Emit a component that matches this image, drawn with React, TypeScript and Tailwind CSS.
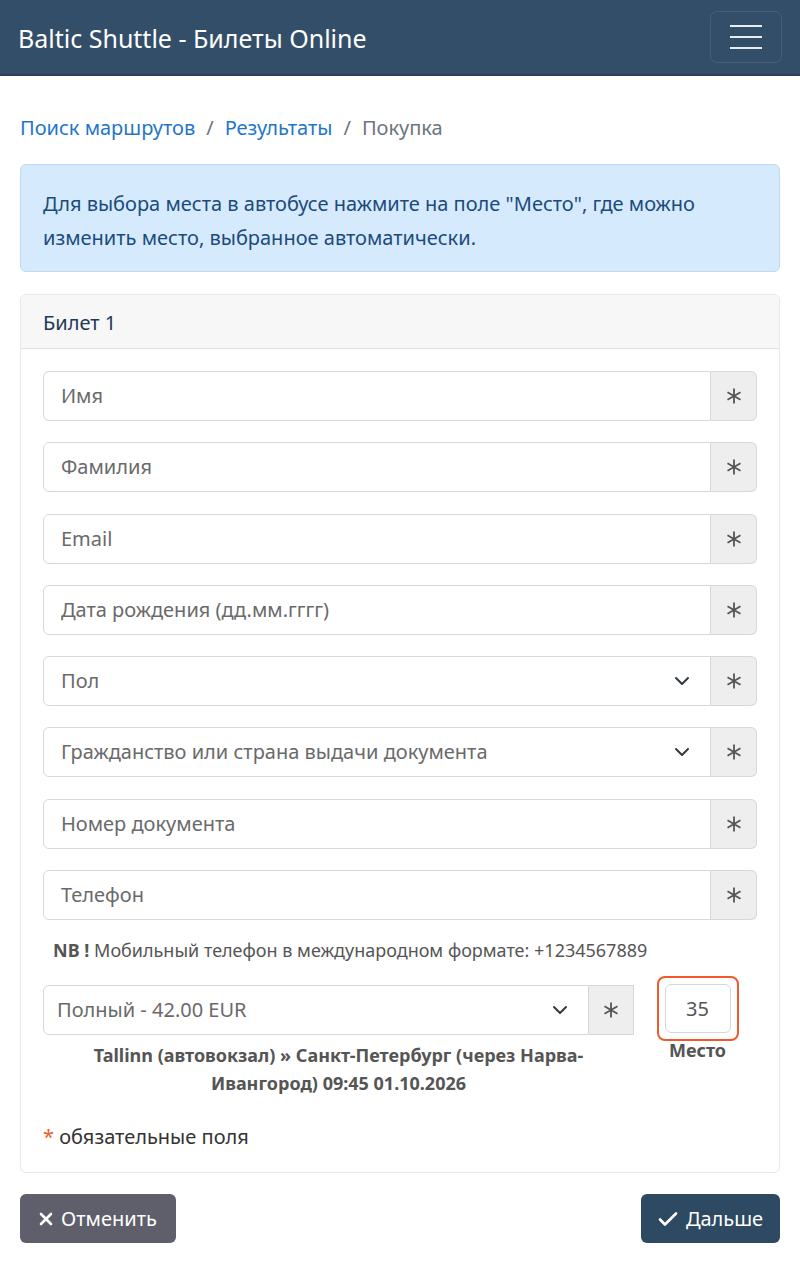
import React from "react";

const font = { fontFamily: '"Noto Sans", "Open Sans", sans-serif' };

function Chevron() {
  return (
    <svg width="16" height="16" viewBox="0 0 16 16" className="text-[#343a40]">
      <path d="M2 5l6 6 6-6" fill="none" stroke="currentColor" strokeWidth="2" strokeLinecap="round" strokeLinejoin="round" />
    </svg>
  );
}

function Star() {
  return (
    <svg width="16" height="16" viewBox="0 0 16 16">
      <path d="M8 0.5v15M1.5 4.25l13 7.5M1.5 11.75l13-7.5" stroke="#555" strokeWidth="1.8" />
    </svg>
  );
}

function Field({ label, select }: { label: string; select?: boolean }) {
  return (
    <div className="flex h-[50px]">
      <div className="flex-1 flex items-center justify-between border border-[#d5d8db] rounded-l-[6px] bg-white pl-[17px] pr-[20px] text-[20px] text-[#6a6a6a]">
        <span>{label}</span>
        {select && <Chevron />}
      </div>
      <div className="w-[46px] flex items-center justify-center border border-l-0 border-[#d5d8db] rounded-r-[6px] bg-[#eeeeee]">
        <Star />
      </div>
    </div>
  );
}

export default function App() {
  return (
    <div style={font} className="bg-white min-h-[1262px]">
      <nav className="h-[76px] bg-[#334e68] border-b-2 border-[#2a4157] flex items-center justify-between pl-[18px] pr-[18px]">
        <span className="text-white text-[25px] pt-[3px]">Baltic Shuttle - Билеты Online</span>
        <button className="w-[72px] h-[52px] border border-white/10 rounded-[7px] flex flex-col items-center justify-center gap-[9px]">
          <span className="block w-[32px] h-[2px] bg-[#e8edf2]" />
          <span className="block w-[32px] h-[2px] bg-[#e8edf2]" />
          <span className="block w-[32px] h-[2px] bg-[#e8edf2]" />
        </button>
      </nav>

      <div className="px-[20px]">
        <div className="mt-[38px] h-[28px] flex items-center text-[20px]">
          <span className="text-[#1f76c9]">Поиск маршрутов</span>
          <span className="text-[#6c757d] px-[11px]">/</span>
          <span className="text-[#1f76c9]">Результаты</span>
          <span className="text-[#6c757d] px-[11px]">/</span>
          <span className="text-[#6c757d]">Покупка</span>
        </div>

        <div className="mt-[22px] h-[108px] bg-[#d6eafd] border border-[#bcdaf6] rounded-[6px] px-[22px] pt-[22px] text-[20px] leading-[34px] text-[#1c4b7b]">
          Для выбора места в автобусе нажмите на поле "Место", где можно изменить место, выбранное автоматически.
        </div>

        <div className="mt-[22px] border border-[#e8e8e8] rounded-[6px]">
          <div className="h-[54px] bg-[#f7f7f7] border-b border-[#e1e1e1] rounded-t-[6px] flex items-center px-[22px] pt-[2px] text-[20px] text-[#1f3a56]">
            Билет 1
          </div>
          <div className="px-[22px] pt-[22px] pb-[20px]">
            <div className="flex flex-col gap-[21.3px]">
              <Field label="Имя" />
              <Field label="Фамилия" />
              <Field label="Email" />
              <Field label="Дата рождения (дд.мм.гггг)" />
              <Field label="Пол" select />
              <Field label="Гражданство или страна выдачи документа" select />
              <Field label="Номер документа" />
              <Field label="Телефон" />
            </div>
            <div className="mt-[17px] pl-[10px] text-[18px] text-[#555]">
              <b>NB !</b> Мобильный телефон в международном формате: +1234567889
            </div>
            <div className="mt-[12px] flex">
              <div className="w-[591px]">
                <div className="flex h-[50px] mt-[9px]">
                  <div className="flex-1 flex items-center justify-between border border-[#d5d8db] rounded-l-[6px] bg-white pl-[13px] pr-[20px] text-[20px] text-[#6a6a6a]">
                    <span>Полный - 42.00 EUR</span>
                    <Chevron />
                  </div>
                  <div className="w-[45px] flex items-center justify-center border border-l-0 border-[#d5d8db] bg-[#eeeeee]">
                    <Star />
                  </div>
                </div>
                <div className="mt-[6px] text-center text-[18px] leading-[28px] font-bold text-[#555] px-[30px]">
                  Tallinn (автовокзал) » Санкт-Петербург (через Нарва-Ивангород) 09:45 01.10.2026
                </div>
              </div>
              <div className="flex-1 flex flex-col items-center pl-[4px]">
                <div className="w-[82px] h-[65px] border-2 border-[#f2582a] rounded-[8px] flex items-center justify-center">
                  <div className="w-[66px] h-[49px] border border-[#d5d8db] rounded-[6px] flex items-center justify-center text-[20px] text-[#555]">
                    35
                  </div>
                </div>
                <div className="text-[18px] font-bold text-[#555] leading-[22px] -mt-[2px]">Место</div>
              </div>
            </div>
            <div className="mt-[25px] text-[20px] text-[#333]">
              <span className="text-[#f2582a]">*</span> обязательные поля
            </div>
          </div>
        </div>

        <div className="mt-[21px] flex justify-between">
          <button className="h-[49px] w-[156px] rounded-[6px] bg-[#5f5f6c] text-white text-[20px] flex items-center justify-center gap-[8px]">
            <svg width="14" height="14" viewBox="0 0 14 14"><path d="M2 2l10 10M12 2L2 12" stroke="white" strokeWidth="2.6" strokeLinecap="round" /></svg>
            Отменить
          </button>
          <button className="h-[49px] w-[139px] rounded-[6px] bg-[#2e4a63] text-white text-[20px] flex items-center justify-center gap-[8px]">
            <svg width="20" height="16" viewBox="0 0 20 16"><path d="M2 8.5l5 5L18 2.5" fill="none" stroke="white" strokeWidth="2.6" strokeLinecap="round" strokeLinejoin="round" /></svg>
            Дальше
          </button>
        </div>
      </div>
    </div>
  );
}
